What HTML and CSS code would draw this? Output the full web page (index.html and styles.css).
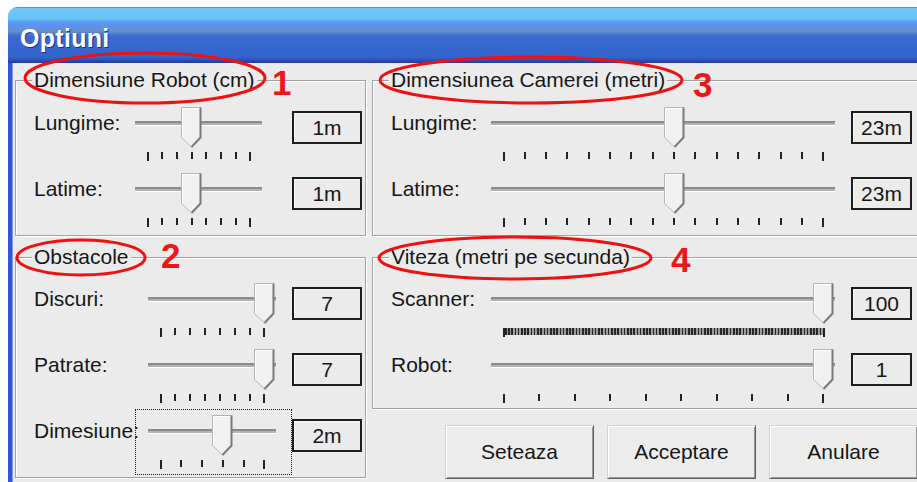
FILE: index.html
```html
<!DOCTYPE html>
<html lang="ro">
<head>
<meta charset="utf-8">
<title>Optiuni</title>
<link rel="stylesheet" href="styles.css">
</head>
<body>
<svg class="defs" width="0" height="0" aria-hidden="true">
  <symbol id="thumb" viewBox="0 0 21 41">
    <path d="M0.5 0.5H19.5V30.5L10.5 40L0.5 30.5Z" fill="#f1f1f1" stroke="#b4b4b4"/>
    <path d="M1.5 30V1.5H18.5" fill="none" stroke="#ffffff"/>
    <path d="M19.5 0.5V30.5L10.5 40" fill="none" stroke="#7a7a7a" stroke-width="2"/>
  </symbol>
</svg>

<div class="window">
  <div class="titlebar"><span class="title">Optiuni</span></div>
  <div class="client">
    <div class="col col-left">
      <section class="group g-top g-robot">
        <div class="legend">Dimensiune Robot (cm)</div>
        <div class="rows">
          <div class="row">
            <span class="lbl">Lungime:</span>
            <div class="slider" style="--p:0.4286">
              <div class="track"></div>
              <div class="ticks"><i></i><i></i><i></i><i></i><i></i><i></i><i></i><i></i></div>
              <svg class="thumb"><use href="#thumb"/></svg>
            </div>
            <div class="val">1m</div>
          </div>
          <div class="row">
            <span class="lbl">Latime:</span>
            <div class="slider" style="--p:0.4286">
              <div class="track"></div>
              <div class="ticks"><i></i><i></i><i></i><i></i><i></i><i></i><i></i><i></i></div>
              <svg class="thumb"><use href="#thumb"/></svg>
            </div>
            <div class="val">1m</div>
          </div>
        </div>
      </section>

      <section class="group g-bottom g-obst">
        <div class="legend">Obstacole</div>
        <div class="rows">
          <div class="row">
            <span class="lbl">Discuri:</span>
            <div class="slider" style="--p:1">
              <div class="track"></div>
              <div class="ticks"><i></i><i></i><i></i><i></i><i></i><i></i><i></i><i></i></div>
              <svg class="thumb"><use href="#thumb"/></svg>
            </div>
            <div class="val">7</div>
          </div>
          <div class="row">
            <span class="lbl">Patrate:</span>
            <div class="slider" style="--p:1">
              <div class="track"></div>
              <div class="ticks"><i></i><i></i><i></i><i></i><i></i><i></i><i></i><i></i></div>
              <svg class="thumb"><use href="#thumb"/></svg>
            </div>
            <div class="val">7</div>
          </div>
          <div class="row">
            <span class="lbl">Dimesiune:</span>
            <div class="slider focused" style="--p:0.6">
              <div class="track"></div>
              <div class="ticks"><i></i><i></i><i></i><i></i><i></i><i></i></div>
              <svg class="thumb"><use href="#thumb"/></svg>
            </div>
            <div class="val">2m</div>
          </div>
        </div>
      </section>
    </div>

    <div class="col col-right">
      <section class="group g-top g-room">
        <div class="legend">Dimensiunea Camerei (metri)</div>
        <div class="rows">
          <div class="row">
            <span class="lbl">Lungime:</span>
            <div class="slider" style="--p:0.5333">
              <div class="track"></div>
              <div class="ticks"><i></i><i></i><i></i><i></i><i></i><i></i><i></i><i></i><i></i><i></i><i></i><i></i><i></i><i></i><i></i><i></i></div>
              <svg class="thumb"><use href="#thumb"/></svg>
            </div>
            <div class="val">23m</div>
          </div>
          <div class="row">
            <span class="lbl">Latime:</span>
            <div class="slider" style="--p:0.5333">
              <div class="track"></div>
              <div class="ticks"><i></i><i></i><i></i><i></i><i></i><i></i><i></i><i></i><i></i><i></i><i></i><i></i><i></i><i></i><i></i><i></i></div>
              <svg class="thumb"><use href="#thumb"/></svg>
            </div>
            <div class="val">23m</div>
          </div>
        </div>
      </section>

      <section class="group g-bottom g-speed">
        <div class="legend">Viteza (metri pe secunda)</div>
        <div class="rows">
          <div class="row">
            <span class="lbl">Scanner:</span>
            <div class="slider" style="--p:1">
              <div class="track"></div>
              <div class="ticks dense"><i></i><b></b><i></i></div>
              <svg class="thumb"><use href="#thumb"/></svg>
            </div>
            <div class="val">100</div>
          </div>
          <div class="row">
            <span class="lbl">Robot:</span>
            <div class="slider" style="--p:1">
              <div class="track"></div>
              <div class="ticks"><i></i><i></i><i></i><i></i><i></i><i></i><i></i><i></i><i></i><i></i></div>
              <svg class="thumb"><use href="#thumb"/></svg>
            </div>
            <div class="val">1</div>
          </div>
        </div>
      </section>

      <div class="buttons">
        <button class="btn">Seteaza</button>
        <button class="btn">Acceptare</button>
        <button class="btn">Anulare</button>
      </div>
    </div>
  </div>
</div>

<!-- callouts drawn over the dialog -->
<svg class="marks" width="917" height="482" aria-hidden="true">
  <ellipse cx="145" cy="78" rx="120" ry="25"/>
  <ellipse cx="81" cy="257.5" rx="64" ry="17.5"/>
  <ellipse cx="531" cy="80" rx="151" ry="23"/>
  <ellipse cx="515" cy="258" rx="136" ry="21"/>
</svg>
<span class="num n1">1</span>
<span class="num n2">2</span>
<span class="num n3">3</span>
<span class="num n4">4</span>
</body>
</html>
```

FILE: styles.css
```css
html, body {
  margin: 0;
  padding: 0;
  overflow: hidden;
  background: #ffffff;
}

body {
  position: relative;
  width: 917px;
  height: 482px;
  font-family: "Liberation Sans", Arial, sans-serif;
  font-size: 21px;
  color: #161616;
}

.defs {
  position: absolute;
}

/* ---- window frame ---- */
.window {
  margin: 7px 0 0 8px;
  width: 909px;
  height: 475px;
  overflow: hidden;
  display: flex;
  flex-direction: column;
}

.titlebar {
  height: 56px;
  flex: none;
  box-sizing: border-box;
  padding: 6px 0 0 12px;
  border-top-left-radius: 9px;
  background: linear-gradient(180deg,
    #7784d4 0, #7784d4 1px,
    #70c9f8 1px, #68c2f8 12px,
    #5c9af2 15px, #5c90ee 20px,
    #6a90c8 24px, #3a6ad2 29px,
    #3264cc 50px, #2c50bc 53px, #22389c 56px);
}

.title {
  display: block;
  line-height: 50px;
  font-size: 25px;
  font-weight: bold;
  color: #ffffff;
  text-shadow: 1px 1px 0 #1a2f86;
  letter-spacing: 0.3px;
}

.client {
  flex: 1;
  display: flex;
  gap: 6px;
  padding: 17px 0 0 3px;
  background: #ebebeb;
  border-left: 4px solid #3156d4;
  box-shadow: inset 1px 0 0 #7f96e4;
}

.col {
  display: flex;
  flex-direction: column;
  flex: none;
}

.col-left {
  width: 351px;
}

.col-right {
  width: 560px;
}

/* ---- group boxes ---- */
.group {
  box-sizing: border-box;
  border: 1px solid #a2a2a2;
  box-shadow: inset 1px 1px 0 #ffffff, 1px 1px 0 #ffffff;
  padding: 0 0 0 16px;
}

.g-top {
  height: 156px;
}

.g-bottom {
  margin-top: 21px;
}

.g-obst {
  height: 221px;
}

.g-speed {
  height: 152px;
}

.legend {
  width: fit-content;
  margin-top: -13px;
  padding: 0 2px;
  line-height: 24px;
  background: #ebebeb;
  white-space: nowrap;
}

.rows {
  display: flex;
  flex-direction: column;
  gap: 10px;
  margin-top: 15px;
}

.g-bottom .rows {
  margin-top: 14px;
}

.g-robot { --lw: 105px; --sw: 124px; --vg: 31px; --vw: 70px; }
.g-obst  { --lw: 118px; --sw: 125px; --vg: 17px; --vw: 70px; }
.g-room,
.g-speed { --lw: 104px; --sw: 341px; --vg: 17px; --vw: 61px; }

.row {
  display: grid;
  grid-template-columns: var(--lw) var(--sw) auto;
  align-items: start;
  height: 56px;
}

.lbl {
  padding-left: 2px;
  line-height: 32px;
  white-space: nowrap;
}

.val {
  box-sizing: border-box;
  width: var(--vw);
  height: 33px;
  margin: 4px 0 0 var(--vg);
  border: 2px solid #1d1d1d;
  box-shadow: inset 1px 1px 0 #f8f8f8;
  line-height: 29px;
  text-align: center;
  background: #ebebeb;
}

/* ---- trackbar ---- */
.slider {
  position: relative;
  width: var(--sw);
  height: 56px;
}

.track {
  height: 4px;
  margin: 14px -1px 0 -2px;
  background: linear-gradient(#8a8a8a 0 50%, #b2b2b2 50%);
  box-shadow: 0 1px 0 #ffffff;
}

.ticks {
  display: flex;
  justify-content: space-between;
  align-items: flex-start;
  padding: 0 9.5px;
  margin-top: 27px;
}

.ticks i {
  display: block;
  width: 2px;
  height: 7px;
  background: #222222;
}

.ticks i:first-child,
.ticks i:last-child {
  height: 9px;
}

.ticks.dense b {
  display: block;
  flex: 1;
  height: 7px;
  background: repeating-linear-gradient(90deg, #262626 0 1.6px, #9c9c9c 1.6px 3.21px);
}

.thumb {
  position: absolute;
  top: 0;
  left: calc(var(--p) * (100% - 21px));
  width: 21px;
  height: 41px;
}

/* keyboard focus rectangle around the active trackbar */
.slider.focused::before {
  content: "";
  position: absolute;
  top: -6px;
  bottom: -4px;
  left: -15px;
  right: -17px;
  border: 1px dotted #1a1a1a;
  pointer-events: none;
}

/* ---- buttons ---- */
.buttons {
  display: flex;
  gap: 13px;
  margin-top: 16px;
  padding-left: 73px;
}

.btn {
  flex: none;
  width: 149px;
  height: 54px;
  box-sizing: border-box;
  font: inherit;
  color: #161616;
  background: #ececec;
  border: 1px solid;
  border-color: #d2d2d2 #5e5e5e #5e5e5e #d2d2d2;
  box-shadow: inset 1px 1px 0 #ffffff, inset -1px -1px 0 #9a9a9a;
  padding: 0;
}

/* ---- red callouts ---- */
.marks {
  position: absolute;
  left: 0;
  top: 0;
  pointer-events: none;
}

.marks ellipse {
  fill: none;
  stroke: #f01010;
  stroke-width: 3;
}

.num {
  position: absolute;
  font-size: 35px;
  line-height: 35px;
  font-weight: bold;
  color: #ee1515;
}

.n1 { left: 272px; top: 65px; }
.n2 { left: 161px; top: 238px; }
.n3 { left: 693px; top: 67px; }
.n4 { left: 671px; top: 242px; }
```
